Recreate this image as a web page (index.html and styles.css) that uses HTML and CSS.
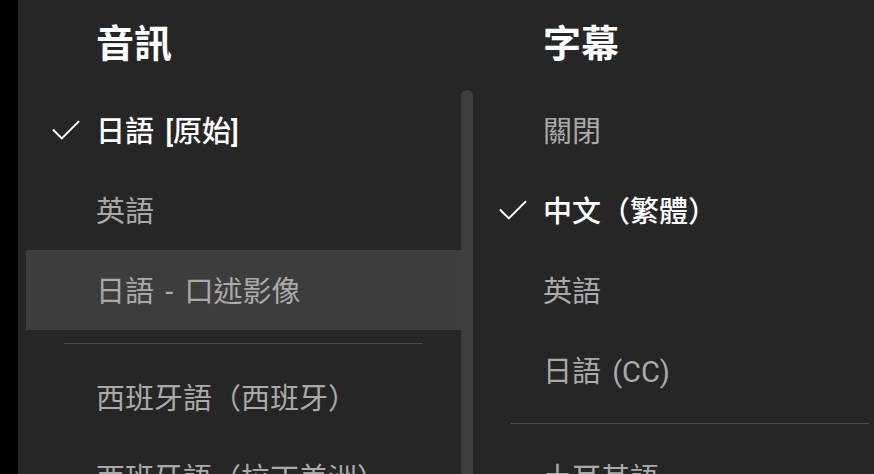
FILE: index.html
```html
<!DOCTYPE html>
<html lang="zh-Hant">
<head>
    <meta charset="UTF-8">
    <meta name="viewport" content="width=device-width, initial-scale=1.0">
    <title>音訊與字幕</title>
    <link rel="stylesheet" href="styles.css">
</head>
<body>
    <div class="screen">
        <div class="edge"></div>
        <div class="panel">
            <div class="column">
                <div class="title">音訊</div>
                <div class="list">
                    <div class="row selected">
                        <svg class="check" viewBox="0 0 30 22"><path d="M1 10.5 L10.5 20 L29 1.5"/></svg>
                        <span>日語 [原始]</span>
                    </div>
                    <div class="row"><span class="check"></span><span>英語</span></div>
                    <div class="row focused"><span class="check"></span><span>日語 - 口述影像</span></div>
                    <div class="divider"></div>
                    <div class="row"><span class="check"></span><span>西班牙語（西班牙）</span></div>
                    <div class="row"><span class="check"></span><span>西班牙語（拉丁美洲）</span></div>
                </div>
            </div>
            <div class="scrollbar"></div>
            <div class="column">
                <div class="title">字幕</div>
                <div class="list">
                    <div class="row"><span class="check"></span><span>關閉</span></div>
                    <div class="row selected">
                        <svg class="check" viewBox="0 0 30 22"><path d="M1 10.5 L10.5 20 L29 1.5"/></svg>
                        <span>中文（繁體）</span>
                    </div>
                    <div class="row"><span class="check"></span><span>英語</span></div>
                    <div class="row"><span class="check"></span><span>日語 (CC)</span></div>
                    <div class="divider"></div>
                    <div class="row"><span class="check"></span><span>土耳其語</span></div>
                </div>
            </div>
        </div>
    </div>
</body>
</html>
```

FILE: styles.css
```css
* {
    margin: 0;
    padding: 0;
    box-sizing: border-box;
}
html, body {
    width: 874px;
    height: 474px;
    overflow: hidden;
    background: #262626;
}
body {
    font-family: "Roboto", "Noto Sans CJK TC", sans-serif;
    color: #aaaaaa;
}
.screen {
    display: flex;
    height: 474px;
}
.edge {
    width: 18px;
    flex-shrink: 0;
    background: #000;
}
.panel {
    display: flex;
    padding-left: 8px;
    flex-shrink: 0;
}
.column {
    width: 435px;
    flex-shrink: 0;
}
.title {
    height: 90px;
    line-height: 88px;
    padding-left: 70px;
    font-size: 38px;
    font-weight: 700;
    color: #fff;
}
.row {
    height: 80px;
    display: flex;
    align-items: center;
    padding-left: 26px;
    padding-bottom: 3px;
    gap: 16px;
    font-size: 29px;
    word-spacing: 4px;
    white-space: nowrap;
}
.row .check {
    width: 28px;
    height: 22px;
    flex-shrink: 0;
    margin-top: 2px;
}
svg.check path {
    fill: none;
    stroke: #fff;
    stroke-width: 2.2;
}
.row.selected {
    color: #fff;
    font-weight: 500;
}
.row.focused {
    background: #3d3d3d;
}
.divider {
    height: 1px;
    margin: 13px 39px 13px 38px;
    background: #4f4f4f;
}
.scrollbar {
    width: 12px;
    flex-shrink: 0;
    margin-top: 90px;
    height: 384px;
    border-radius: 6px 6px 0 0;
    background: #3e3e3e;
}
```
